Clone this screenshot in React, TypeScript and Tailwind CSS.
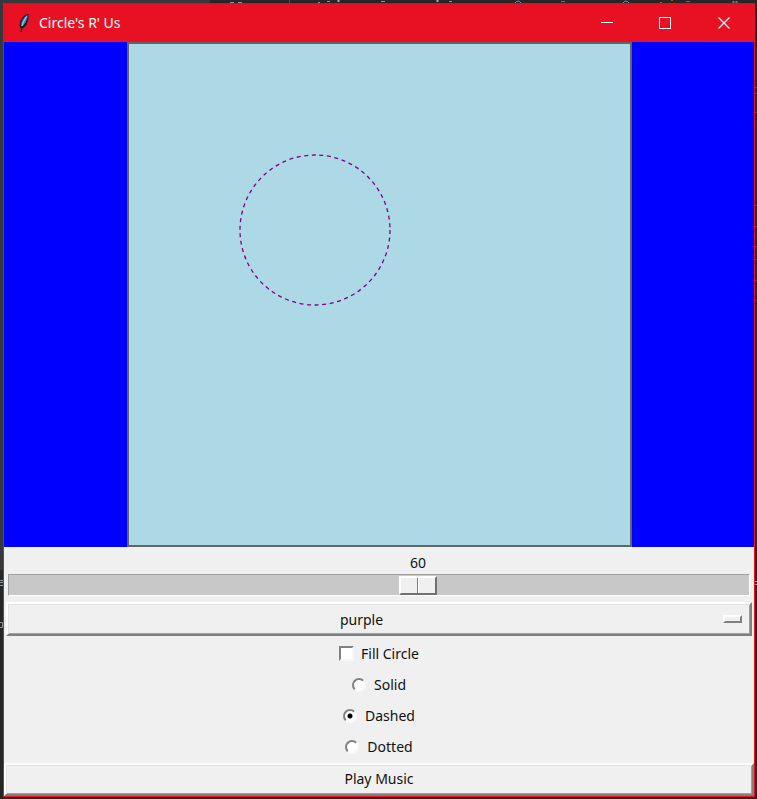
import { useState } from "react";

const RAISED =
  "border-2 border-t-white border-l-white border-r-[#808080] border-b-[#808080] bg-[#f0f0f0] shadow-[inset_1px_1px_0_#e3e3e3,inset_-1px_-1px_0_#a0a0a0]";

function Feather() {
  return (
    <svg width="12" height="20" viewBox="0 0 12 20" aria-hidden="true">
      <path d="M10.500 1C7 1.500 3.500 4.500 2 9l-.5 4 1.500 3 2-.5 3.500-3.500 2-6z" fill="#1b1d2c" />
      <path d="M9.500 2C7 3 5 5.500 3.500 9.500L3 13l2-.5 2.500-3 2-5z" fill="#4a86c8" />
      <path d="M8.500 3.500 5.500 8.500 4 13" stroke="#a9cdec" strokeWidth="1" fill="none" />
      <path d="M4 13 3 19" stroke="#30101a" strokeWidth="1.400" fill="none" />
    </svg>
  );
}

/* Slivers of the code editor that show around the edges of the window. */
function EditorBehind() {
  return (
    <>
      <svg className="absolute top-0 left-0" width="757" height="3" fill="none" aria-hidden="true">
        <path d="M0 1.500h210" stroke="#36383b" strokeWidth="3" />
        <path d="M289.500 0v3" stroke="#505050" />
        <path d="M230 2.500h4m4 0h4m76 0h2m7-1h3m51 0h4m64 0h3" stroke="#8c98a8" />
        <path d="M338.500 0v2m99-2v2" stroke="#9cb0c8" strokeWidth="2" />
        <path d="M515 3q3-4 6 0m102 0q3-4 6 0" stroke="#6c9cc4" />
        <path d="M561 1.500h4m95 1h2m9-2h2m13 1h4" stroke="#b05830" />
        <path d="M733.500 1v2m3-2v2" stroke="#6a8759" strokeWidth="2" />
      </svg>
      <svg className="absolute top-0 left-0" width="3" height="799" fill="none" aria-hidden="true">
        <path d="M1.500 0v570" stroke="#36383b" strokeWidth="3" />
        <path d="M0 580.500h3m-3 2h3m-3 3h3m-3 37h2.500v5h-2.500" stroke="#8c98a0" />
      </svg>
      <svg className="absolute top-0 right-0" width="2" height="799" fill="none" aria-hidden="true">
        <path
          d="M0 87.500h2m-2 6h2m-2 19h2m-2 93h2m-2 21h2m-2 20h2m-2 13h2m-2 21h2m-2 20h2"
          stroke="#7a4038"
        />
        <path d="M0 581.500h2m-2 3h2" stroke="#8c98a0" />
      </svg>
    </>
  );
}

function TitleBar() {
  return (
    <header className="flex h-[38px] shrink-0 items-center bg-[#e81123] pl-[14px] text-white">
      <Feather />
      <h1 className="ml-[9px] flex-1 text-[14px] leading-5">Circle's R' Us</h1>
      <button type="button" aria-label="Minimize" className="flex h-full w-[58px] items-center justify-center">
        <svg width="12" height="12" viewBox="0 0 12 12" shapeRendering="crispEdges">
          <path d="M0 5.5h12" stroke="white" />
        </svg>
      </button>
      <button type="button" aria-label="Maximize" className="flex h-full w-[58px] items-center justify-center">
        <svg width="12" height="12" viewBox="0 0 12 12" shapeRendering="crispEdges">
          <path d="M.5.5h11v11H.5z" stroke="white" fill="none" />
        </svg>
      </button>
      <button type="button" aria-label="Close" className="flex h-full w-[60px] items-center justify-center">
        <svg width="12" height="12" viewBox="0 0 12 12">
          <path d="m.5.5 11 11m0-11-11 11" stroke="white" strokeWidth="1.2" />
        </svg>
      </button>
    </header>
  );
}

const DASHES: Record<string, string | undefined> = { Solid: undefined, Dashed: "4 3.6", Dotted: "1 3" };

export default function App() {
  const [size, setSize] = useState(60);
  const [fill, setFill] = useState(false);
  const [line, setLine] = useState("Dashed");
  const [color, setColor] = useState("purple");

  return (
    <div className="relative min-h-screen bg-[#262626] pt-[3px] pr-[2px] pb-[2px] pl-[3px] font-['Noto_Sans','Open_Sans',sans-serif] text-[#101010]">
      <EditorBehind />
      <main className="flex flex-col border border-t-0 border-[#e81123] bg-[#f0f0f0]">
        <div className="h-px bg-[#b02030]" />
        <TitleBar />
        <div className="flex justify-center bg-[#0000ff]">
          <svg
            viewBox="0 0 501 501"
            role="img"
            aria-label="Circle canvas"
            className="box-content size-[501px] border-2 border-[#646464] bg-[#add8e6]"
          >
            <circle
              cx="186"
              cy="186"
              r="75"
              stroke={color}
              strokeWidth="1.3"
              strokeDasharray={DASHES[line]}
              fill={fill ? color : "none"}
            />
          </svg>
        </div>
        <div className="flex flex-col pt-[5px]">
          <div className="px-1">
            <output htmlFor="size" className="mb-px block pl-[78px] text-center text-[14px] leading-[21px]">
              {size}
            </output>
            <input
              id="size"
              type="range"
              min="0"
              max="108"
              value={size}
              aria-label="Size"
              onChange={(e) => setSize(Number(e.target.value))}
              className="block h-[22px] w-full appearance-none border border-t-[#a0a0a0] border-l-[#a0a0a0] border-r-white border-b-white bg-[#c8c8c8] [&::-webkit-slider-thumb]:h-[19px] [&::-webkit-slider-thumb]:w-[38px] [&::-webkit-slider-thumb]:appearance-none [&::-webkit-slider-thumb]:border-2 [&::-webkit-slider-thumb]:border-t-white [&::-webkit-slider-thumb]:border-l-white [&::-webkit-slider-thumb]:border-r-[#707070] [&::-webkit-slider-thumb]:border-b-[#707070] [&::-webkit-slider-thumb]:bg-[linear-gradient(90deg,#f0f0f0_16px,#808080_16px,#808080_17px,#fff_17px,#fff_18px,#f0f0f0_18px)]"
            />
          </div>
          <div className={`mx-[2px] mt-[6px] flex h-[34px] items-center ${RAISED}`}>
            <select
              aria-label="Color"
              value={color}
              onChange={(e) => setColor(e.target.value)}
              className="h-full flex-1 appearance-none pr-[8px] text-center text-[14px] [text-align-last:center]"
            >
              <option>purple</option>
              <option>red</option>
              <option>green</option>
            </select>
            <span className="mr-[8px] h-[8px] w-[19px] border-2 border-t-white border-l-white border-r-[#808080] border-b-[#808080]" />
          </div>
          <label className="mt-[3px] flex h-[31px] items-center justify-center gap-[7px] pb-[2px] text-[14px]">
            <input
              type="checkbox"
              checked={fill}
              onChange={(e) => setFill(e.target.checked)}
              className="size-[15px] appearance-none border-2 border-t-[#808080] border-l-[#808080] border-r-[#f8f8f8] border-b-[#f8f8f8] bg-white checked:bg-black"
            />
            Fill Circle
          </label>
          {["Solid", "Dashed", "Dotted"].map((name) => (
            <label key={name} className="flex h-[31px] items-center justify-center gap-[8px] pb-[2px] text-[14px]">
              <input
                type="radio"
                name="line"
                checked={line === name}
                onChange={() => setLine(name)}
                className="size-[14px] appearance-none rounded-full border-2 border-t-[#808080] border-l-[#808080] border-r-[#f8f8f8] border-b-[#f8f8f8] bg-white checked:bg-[radial-gradient(circle,#000_2px,#fff_3px)]"
              />
              {name}
            </label>
          ))}
          <button type="button" className={`h-[33px] w-full pb-[2px] text-[14px] ${RAISED}`}>
            Play Music
          </button>
        </div>
      </main>
    </div>
  );
}
